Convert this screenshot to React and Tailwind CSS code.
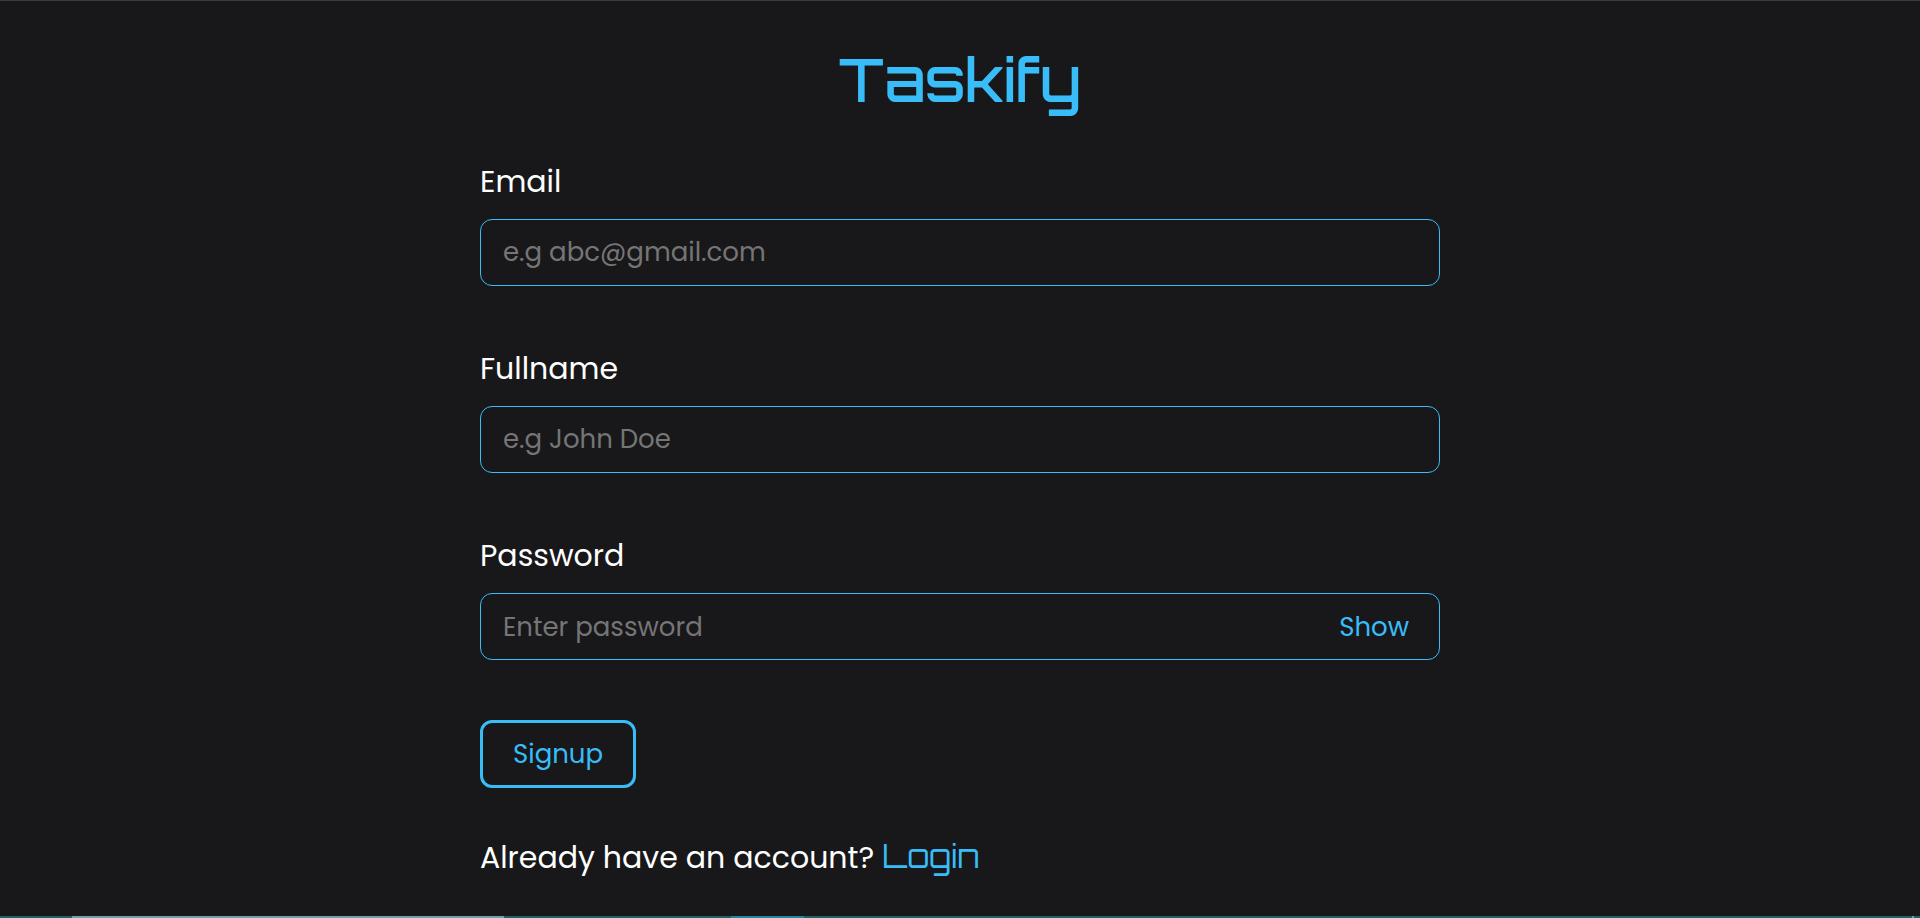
import { useState } from "react";

const inputClass =
  "h-[67px] w-full rounded-xl border border-[#38bdf8] bg-transparent px-[22px] text-[26px] leading-10 text-white placeholder:text-[#757575] outline-none";

function Field({ id, label, children }) {
  return (
    <div className="flex flex-col gap-[14px]">
      <label htmlFor={id} className="text-[30px] leading-[46px] text-white">
        {label}
      </label>
      {children}
    </div>
  );
}

export default function App() {
  const [visible, setVisible] = useState(false);

  return (
    <div className="flex min-h-screen flex-col border-t border-[#3c3c3e] bg-[#18181a] font-['Poppins','Inter',sans-serif]">
      <main className="mx-auto flex w-1/2 grow flex-col">
        <h1 className="mt-10 text-center font-['Orbitron','DejaVu_Sans',sans-serif] text-[60px] leading-19 font-medium text-[#38bdf8]">
          Taskify
        </h1>
        <form className="mt-[42px] flex flex-col gap-15" onSubmit={(e) => e.preventDefault()}>
          <Field id="email" label="Email">
            <input id="email" type="email" placeholder="e.g abc@gmail.com" className={inputClass} />
          </Field>
          <Field id="fullname" label="Fullname">
            <input id="fullname" type="text" placeholder="e.g John Doe" className={inputClass} />
          </Field>
          <Field id="password" label="Password">
            <div className="flex h-[67px] items-center rounded-xl border border-[#38bdf8]">
              <input
                id="password"
                type={visible ? "text" : "password"}
                placeholder="Enter password"
                className="min-w-0 grow bg-transparent px-[22px] text-[26px] leading-10 text-white outline-none placeholder:text-[#757575]"
              />
              <button
                type="button"
                onClick={() => setVisible(!visible)}
                className="px-[30px] text-[26px] leading-10 text-[#38bdf8]"
              >
                {visible ? "Hide" : "Show"}
              </button>
            </div>
          </Field>
          <button
            type="submit"
            className="h-17 self-start rounded-xl border-3 border-[#38bdf8] px-[30px] text-[26px] leading-10 text-[#38bdf8]"
          >
            Signup
          </button>
        </form>
        <p className="mt-11 text-[30px] leading-12 text-white">
          Already have an account?{" "}
          <a href="#login" className="font-['Orbitron','DejaVu_Sans',sans-serif] text-[32px] text-[#38bdf8]">
            Login
          </a>
        </p>
      </main>
      <div className="flex h-0.5 bg-[#1f6266]">
        <span className="ml-18 w-108 bg-[#68a5ab]" />
        <span className="ml-[227px] w-[73px] bg-[#1c8a9a]" />
        <span className="mr-1.5 ml-auto w-0.5 bg-[#68a5ab]" />
      </div>
    </div>
  );
}
